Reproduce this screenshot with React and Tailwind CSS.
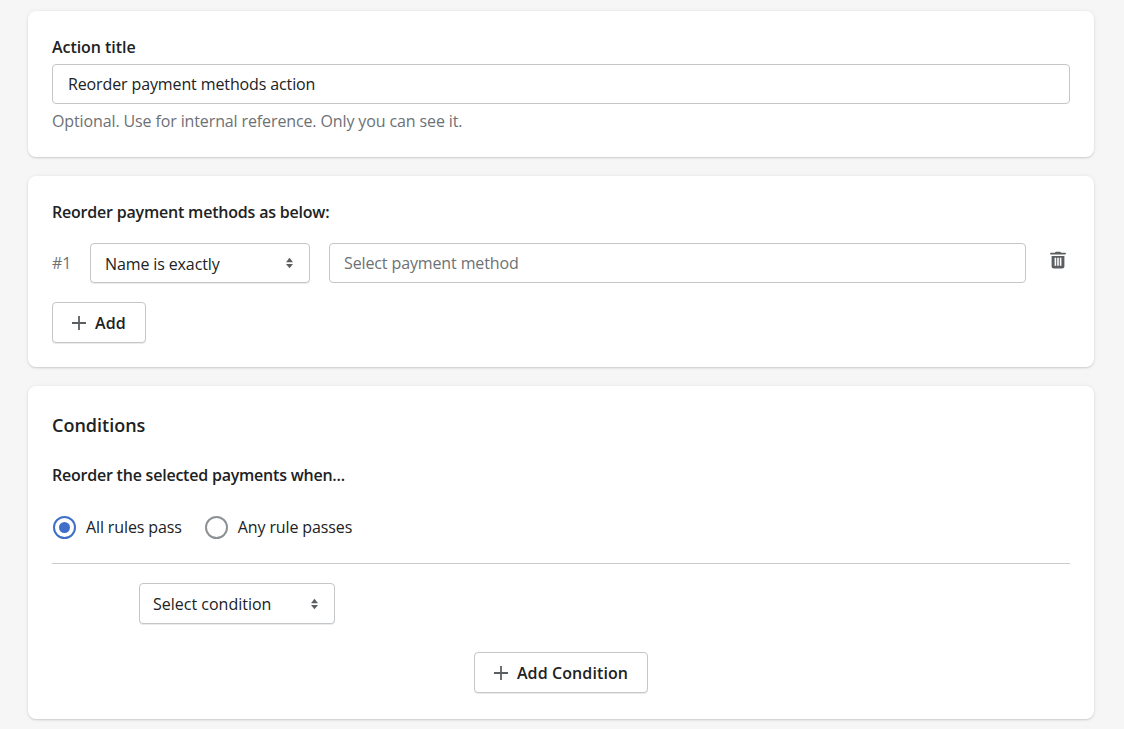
function Updown() {
  return (
    <svg viewBox="0 0 10 16" className="w-[9px] h-[14px]" fill="#5c5f62">
      <path d="M5 2 L9 7 H1 Z" />
      <path d="M5 14 L9 9 H1 Z" />
    </svg>
  )
}

function Plus() {
  return (
    <svg viewBox="0 0 14 14" className="w-[14px] h-[14px]" fill="#5c5f62">
      <path d="M6.100 0h1.800v6.100H14v1.800H7.900V14H6.100V7.900H0V6.100h6.100z" />
    </svg>
  )
}

function Trash() {
  return (
    <svg viewBox="0 0 16 18" className="w-[16px] h-[18px]" fill="#5c5f62">
      <path d="M6 .8h4c.5 0 .9.4 1 1h4.200c.4 0 .8.4.8.8s-.4.9-.8.9H.8C.4 3.500 0 3.100 0 2.600s.4-.8.8-.8H5c.1-.6.5-1 1-1z" />
      <path d="M1.600 5h12.800v10.200c0 1.300-1 2.300-2.300 2.300H3.900c-1.300 0-2.300-1-2.300-2.300V5zm3 1.800v7.900h1.600V6.800H4.600zm2.600 0v7.900h1.600V6.800H7.200zm2.600 0v7.900h1.600V6.800H9.800z" />
    </svg>
  )
}

function Card({ className, children }) {
  return (
    <div className={`bg-white rounded-lg shadow-[0_0_5px_rgba(23,24,24,0.05),0_1px_2px_rgba(0,0,0,0.15)] px-6 ${className}`}>
      {children}
    </div>
  )
}

function Select({ label, className }) {
  return (
    <div className={`flex items-center justify-between bg-white border border-[#c4c7ca] rounded shadow-[0_1px_0_rgba(0,0,0,0.08)] text-[#202223] ${className}`}>
      <span className="pt-px">{label}</span>
      <Updown />
    </div>
  )
}

function Button({ label, className }) {
  return (
    <button className={`flex items-center justify-center gap-[9px] bg-white border border-[#c4c7ca] rounded shadow-[0_1px_0_rgba(0,0,0,0.08)] font-semibold tracking-[0.1px] text-[#202223] ${className}`}>
      <Plus />
      <span>{label}</span>
    </button>
  )
}

function Radio({ label, checked }) {
  return (
    <div className="flex items-center gap-[10px]">
      {checked ? (
        <span className="ml-px w-[23px] h-[23px] rounded-full border-2 border-[#3f6fc9] flex items-center justify-center">
          <span className="w-[11px] h-[11px] rounded-full bg-[#3f6fc9]" />
        </span>
      ) : (
        <span className="ml-px w-[23px] h-[23px] rounded-full border-2 border-[#8c9196]" />
      )}
      <span>{label}</span>
    </div>
  )
}

export default function App() {
  return (
    <div className="h-[729px] overflow-hidden bg-[#f6f6f7] pl-7 pr-[30px] pt-[11px] flex flex-col gap-[19px] text-[16px] leading-6 text-[#202223] font-['Open_Sans','Noto_Sans',sans-serif] tracking-[-0.12px]">
      <Card className="h-[146px] pt-6">
        <label className="block font-semibold tracking-[-0.05px] h-[29px]">Action title</label>
        <div className="h-10 flex items-center border border-[#c4c7ca] rounded px-[15px]">Reorder payment methods action</div>
        <p className="mt-[5px] text-[#6d7175]">Optional. Use for internal reference. Only you can see it.</p>
      </Card>

      <Card className="h-[191px] pt-6">
        <p className="font-semibold tracking-[-0.2px] h-[43px]">Reorder payment methods as below:</p>
        <div className="flex items-center">
          <span className="w-[38px] text-[#6d7175]">#1</span>
          <Select label="Name is exactly" className="w-[220px] h-10 pl-[14px] pr-[15px]" />
          <div className="ml-[19px] w-[697px] h-10 flex items-center border border-[#c4c7ca] rounded px-[14px] text-[#6d7175]">Select payment method</div>
          <span className="ml-6 -mt-[6px]"><Trash /></span>
        </div>
        <Button label="Add" className="mt-[19px] w-[94px] h-[41px]" />
      </Card>

      <Card className="h-[333px] pt-[26px]">
        <h2 className="font-semibold tracking-[0px] text-[18px] leading-[26px]">Conditions</h2>
        <p className="mt-[25px] font-semibold tracking-[-0.22px]">Reorder the selected payments when...</p>
        <div className="mt-[28px] flex gap-[22px]">
          <Radio label="All rules pass" checked />
          <Radio label="Any rule passes" />
        </div>
        <div className="mt-6 border-t border-[#c9cccf]" />
        <Select label="Select condition" className="mt-[19px] ml-[87px] w-[196px] h-[41px] pl-[13px] pr-[15px] tracking-[0px]" />
        <div className="mt-7 flex justify-center">
          <Button label="Add Condition" className="w-[174px] h-[41px]" />
        </div>
      </Card>
    </div>
  )
}
